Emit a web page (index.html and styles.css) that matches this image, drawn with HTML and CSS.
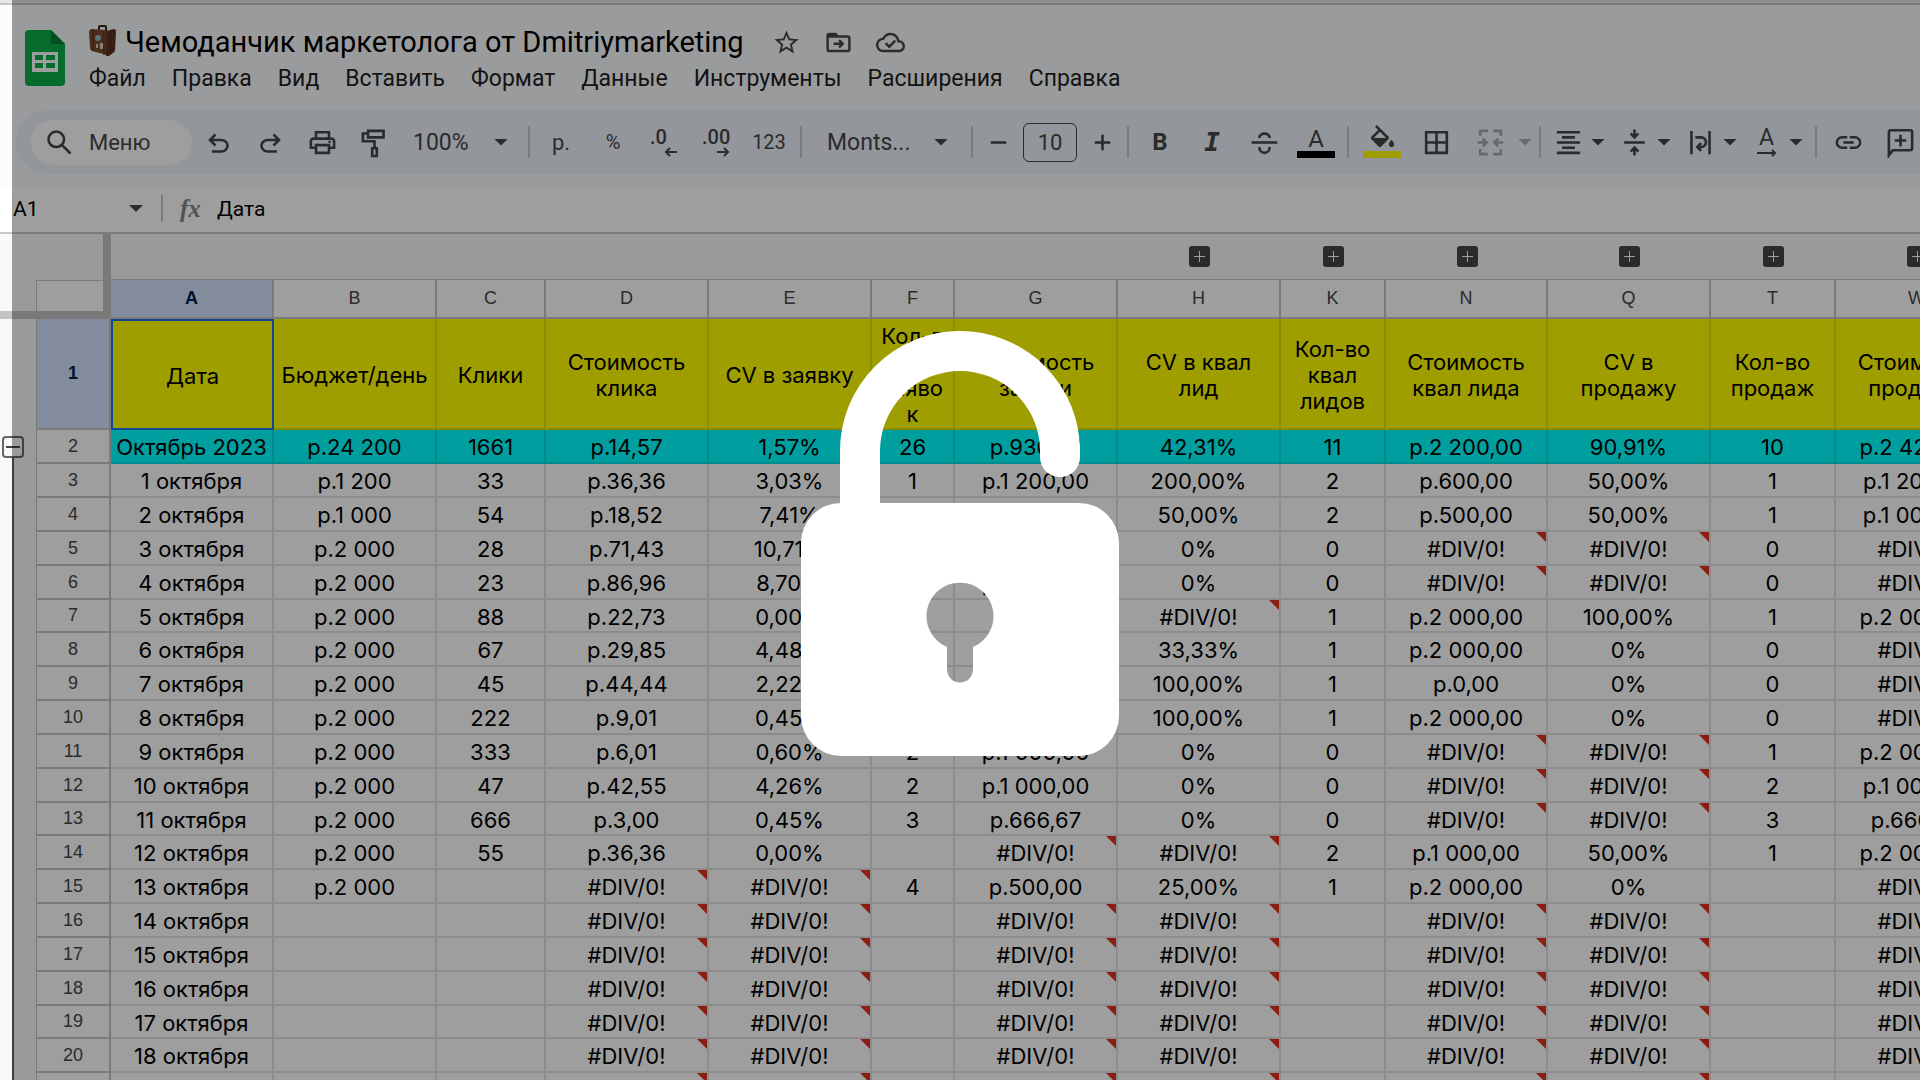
FILE: index.html
```html
<!DOCTYPE html>
<html lang="ru">
<head>
    <meta charset="UTF-8">
    <meta name="viewport" content="width=device-width, initial-scale=1.0">
    <title>Чемоданчик маркетолога от Dmitriymarketing</title>
    <link rel="stylesheet" href="styles.css">
</head>
<body>
    <div class="top-strip"></div>

    <header class="header">
        <svg class="logo" viewBox="0 0 40 56">
            <path fill="#0aaf4b" d="M4 0h22l14 14v38a4 4 0 0 1-4 4H4a4 4 0 0 1-4-4V4a4 4 0 0 1 4-4z"/>
            <path fill="#088038" d="M26 0l14 14H26z"/>
            <path fill="#fff" fill-rule="evenodd" d="M7 22h26v20H7zM10 25v5h8v-5zM21 25v5h9v-5zM10 33v5h8v-5zM21 33v5h9v-5z"/>
        </svg>
        <div class="header-main">
            <div class="title-row">
                <svg class="suitcase" viewBox="0 0 28 31">
                    <path fill="none" stroke="#3a2418" stroke-width="2" d="M10 5V2q0-1 1-1h5q1 0 1 1v4"/>
                    <path fill="#7d4a2c" d="M0 7q0-2 2-3l14 1q2 0 2 2v23L3 26q-2-1-2-3z"/>
                    <path fill="#5c3520" d="M17 6l8-2q2 0 2 3l-1 18q0 2-2 3l-4 3h-3z"/>
                    <path stroke="#4a2c1a" stroke-width="1" d="M4 5v21M15 6v24M22 5v24"/>
                    <circle cx="9" cy="13" r="3" fill="#8fb8c4"/>
                    <path fill="#d8d0c4" d="M7 19h2v4H7zM11 18h3v6h-3z"/>
                </svg>
                <h1>Чемоданчик маркетолога от Dmitriymarketing</h1>
                <button class="title-btn" aria-label="Пометить">
                    <svg class="icon" viewBox="0 0 24 24"><path d="M22 9.24l-7.19-.62L12 2 9.19 8.63 2 9.24l5.46 4.73L5.82 21 12 17.27 18.18 21l-1.63-7.03L22 9.24zM12 15.4l-3.76 2.27 1-4.28-3.32-2.88 4.38-.38L12 6.1l1.71 4.04 4.38.38-3.32 2.88 1 4.28L12 15.4z"/></svg>
                </button>
                <button class="title-btn" aria-label="Переместить">
                    <svg class="icon" viewBox="0 0 24 24"><path d="M20 6h-8l-2-2H4c-1.1 0-2 .9-2 2v12c0 1.1.9 2 2 2h16c1.1 0 2-.9 2-2V8c0-1.1-.9-2-2-2zm0 12H4V8h16v10z"/><path class="line" d="M8 13h7M12.5 10l3 3-3 3"/></svg>
                </button>
                <button class="title-btn" aria-label="Сохранено на Диске">
                    <svg class="icon" viewBox="0 0 24 24"><path d="M19.35 10.04C18.67 6.59 15.64 4 12 4 9.11 4 6.6 5.64 5.35 8.04 2.34 8.36 0 10.91 0 14c0 3.31 2.69 6 6 6h13c2.76 0 5-2.24 5-5 0-2.64-2.05-4.78-4.65-4.96zM19 18H6c-2.21 0-4-1.79-4-4 0-2.05 1.53-3.76 3.56-3.97l1.07-.11.5-.95C8.08 7.14 9.94 6 12 6c2.62 0 4.88 1.86 5.39 4.43l.3 1.5 1.53.11c1.56.1 2.78 1.41 2.78 2.96 0 1.65-1.35 3-3 3z"/><path class="line" d="M8 12.5l3 3 5-5"/></svg>
                </button>
            </div>
            <nav class="menu">
                <a href="#">Файл</a>
                <a href="#">Правка</a>
                <a href="#">Вид</a>
                <a href="#">Вставить</a>
                <a href="#">Формат</a>
                <a href="#">Данные</a>
                <a href="#">Инструменты</a>
                <a href="#">Расширения</a>
                <a href="#">Справка</a>
            </nav>
        </div>
    </header>

    <div class="toolbar">
        <button class="search">
            <svg class="icon" viewBox="0 0 24 24"><circle class="line" cx="9.5" cy="9.5" r="6"/><path class="line" d="M14 14l6.5 6.5"/></svg>
            Меню
        </button>
        <button class="tool" aria-label="Отменить">
            <svg class="icon" viewBox="0 0 24 24"><path d="M7 20v-2h7.1q1.6 0 2.7-1t1.2-2.5-1.2-2.5-2.7-1H7.8l2.6 2.6L9 15l-5-5 5-5 1.4 1.4L7.8 9h6.3q2.4 0 4.2 1.6t1.7 3.9-1.7 3.9-4.2 1.6z"/></svg>
        </button>
        <button class="tool" aria-label="Повторить">
            <svg class="icon" viewBox="0 0 24 24"><path transform="matrix(-1 0 0 1 24 0)" d="M7 20v-2h7.1q1.6 0 2.7-1t1.2-2.5-1.2-2.5-2.7-1H7.8l2.6 2.6L9 15l-5-5 5-5 1.4 1.4L7.8 9h6.3q2.4 0 4.2 1.6t1.7 3.9-1.7 3.9-4.2 1.6z"/></svg>
        </button>
        <button class="tool" aria-label="Печать">
            <svg class="icon" viewBox="0 0 24 24"><path d="M19 8h-1V3H6v5H5c-1.66 0-3 1.34-3 3v6h4v4h12v-4h4v-6c0-1.66-1.34-3-3-3zM8 5h8v3H8V5zm8 14H8v-4h8v4zm2-4v-2H6v2H4v-4c0-.55.45-1 1-1h14c.55 0 1 .45 1 1v4h-2z"/><circle cx="17.5" cy="11.5" r="1"/></svg>
        </button>
        <button class="tool" aria-label="Копировать форматирование">
            <svg class="icon" viewBox="0 0 24 24"><path class="line" d="M7 3h12v5H7zM7 5H3v6h9v5M10.2 16.500h3.600v6h-3.600z"/></svg>
        </button>
        <label class="dropdown zoom">
            <select aria-label="Масштаб"><option>100%</option></select>
            <span class="caret"></span>
        </label>
        <span class="sep"></span>
        <button class="tool">р.</button>
        <button class="tool small">%</button>
        <button class="tool decimals">
            <span>.0</span>
            <svg viewBox="0 0 14 10"><path class="line" d="M13 5H2M6 1L2 5l4 4"/></svg>
        </button>
        <button class="tool decimals">
            <span>.00</span>
            <svg viewBox="0 0 14 10"><path class="line" d="M1 5h11M8 1l4 4-4 4"/></svg>
        </button>
        <button class="tool small">123</button>
        <span class="sep"></span>
        <label class="dropdown font">
            <select aria-label="Шрифт"><option>Monts...</option></select>
            <span class="caret"></span>
        </label>
        <span class="sep"></span>
        <button class="tool step" aria-label="Уменьшить"><svg class="icon" viewBox="0 0 24 24"><path class="line" d="M6 12h12"/></svg></button>
        <input class="size" type="text" value="10" aria-label="Размер шрифта">
        <button class="tool step" aria-label="Увеличить"><svg class="icon" viewBox="0 0 24 24"><path class="line" d="M6 12h12M12 6v12"/></svg></button>
        <span class="sep"></span>
        <button class="tool bold">B</button>
        <button class="tool italic">I</button>
        <button class="tool" aria-label="Зачеркнутый">
            <svg class="icon" viewBox="0 0 24 24"><path class="line" d="M2 12h20M8 8.500c0-4.500 8-4.500 8 0M8 15.500c0 6 8 6 8 0"/></svg>
        </button>
        <button class="tool color">
            <span>A</span>
            <span class="bar"></span>
        </button>
        <span class="sep"></span>
        <div class="cell-tools">
            <button class="tool color fill" aria-label="Цвет заливки">
                <svg class="icon" viewBox="0 0 24 24"><path d="M16.56 8.94L7.62 0 6.21 1.41l2.38 2.38-5.15 5.15c-.59.59-.59 1.54 0 2.12l5.5 5.5c.29.29.68.44 1.06.44s.77-.15 1.06-.44l5.5-5.5c.59-.58.59-1.53 0-2.12zM5.21 10L10 5.21 14.79 10H5.21zM19 11.5s-2 2.17-2 3.5c0 1.1.9 2 2 2s2-.9 2-2c0-1.33-2-3.5-2-3.5z"/></svg>
                <span class="bar"></span>
            </button>
            <button class="tool" aria-label="Границы">
                <svg class="icon" viewBox="0 0 24 24"><path d="M3 3v18h18V3H3zm8 16H5v-6h6v6zm0-8H5V5h6v6zm8 8h-6v-6h6v6zm0-8h-6V5h6v6z"/></svg>
            </button>
            <button class="tool" disabled aria-label="Объединить ячейки">
                <svg class="icon" viewBox="0 0 24 24"><path class="line" d="M10 3H4v4M14 3h6v4M4 17v4h6M20 17v4h-6M2 12h7M6 9l3 3-3 3M22 12h-7M18 9l-3 3 3 3"/></svg>
            </button>
            <span class="caret off"></span>
        </div>
        <span class="sep"></span>
        <button class="tool split" aria-label="Выравнивание">
            <svg class="icon" viewBox="0 0 24 24"><path d="M7 15v2h10v-2H7zm-4 6h18v-2H3v2zm0-8h18v-2H3v2zm4-6v2h10V7H7zM3 3v2h18V3H3z"/></svg>
            <span class="caret"></span>
        </button>
        <button class="tool split" aria-label="Вертикальное выравнивание">
            <svg class="icon" viewBox="0 0 24 24"><path class="line" d="M4 12h16M12 2v5M9 5l3 3 3-3M12 22v-5M9 19l3-3 3 3"/></svg>
            <span class="caret"></span>
        </button>
        <button class="tool split" aria-label="Перенос текста">
            <svg class="icon" viewBox="0 0 24 24"><path class="line" d="M5 3v18M19 3v18M8 8h4.500a3.500 3.500 0 0 1 0 7.500H10M12.500 12.500l-3 3 3 3"/></svg>
            <span class="caret"></span>
        </button>
        <button class="tool split rotate" aria-label="Поворот текста">
            <span class="letter">
                <span>A</span>
                <svg viewBox="0 0 22 8"><path class="line" d="M1 4h18M16 1l3 3-3 3"/></svg>
            </span>
            <span class="caret"></span>
        </button>
        <span class="sep"></span>
        <button class="tool" aria-label="Вставить ссылку">
            <svg class="icon" viewBox="0 0 24 24"><path d="M3.9 12c0-1.71 1.39-3.1 3.1-3.1h4V7H7a5 5 0 0 0 0 10h4v-1.9H7c-1.71 0-3.1-1.39-3.1-3.1zM8 13h8v-2H8v2zm9-6h-4v1.9h4c1.71 0 3.1 1.39 3.1 3.1s-1.39 3.1-3.1 3.1h-4V17h4a5 5 0 0 0 0-10z"/></svg>
        </button>
        <button class="tool" aria-label="Вставить комментарий">
            <svg class="icon" viewBox="0 0 24 24"><path class="line" d="M3 22V4q0-1.500 1.500-1.500h15Q21 2.500 21 4v12.500q0 1.500-1.500 1.500H6zM12 6v9M7.500 10.500h9"/></svg>
        </button>
    </div>

    <div class="formula-bar">
        <input class="name-box" type="text" value="A1" aria-label="Поле имени">
        <span class="caret"></span>
        <span class="formula-sep"></span>
        <label class="fx" for="formula">fx</label>
        <input id="formula" type="text" value="Дата">
    </div>

    <main class="sheet">
        <table>
            <colgroup id="cols"></colgroup>
            <thead id="head"></thead>
            <tbody id="rows"></tbody>
        </table>
    </main>

    <div class="overlay">
        <svg class="lock" viewBox="0 0 320 426">
            <path fill="none" stroke="#fff" stroke-width="40" d="M60 190V121a100 100 0 0 1 200 0"/>
            <path fill="none" stroke="#fff" stroke-width="40" stroke-linecap="round" d="M260 120v7"/>
            <path fill="#fff" fill-rule="evenodd" d="M41 173h238a40 40 0 0 1 40 40v173a40 40 0 0 1-40 40H41a40 40 0 0 1-40-40V213a40 40 0 0 1 40-40zM147 317v22.500a13 13 0 0 0 26 0V317a33.500 33.500 0 1 0-26 0z"/>
        </svg>
    </div>

    <script>
        const ERR = '#DIV/0!';

        const columns = [
            { name: 'A', width: 163, title: 'Дата' },
            { name: 'B', width: 163, title: 'Бюджет/день' },
            { name: 'C', width: 109, title: 'Клики' },
            { name: 'D', width: 163, title: 'Стоимость<br>клика' },
            { name: 'E', width: 163, title: 'CV в заявку' },
            { name: 'F', width: 83, title: 'Кол-в<br>о<br>заяво<br>к' },
            { name: 'G', width: 163, title: 'Стоимость<br>заявки' },
            { name: 'H', width: 163, title: 'CV в квал<br>лид', group: true },
            { name: 'K', width: 105, title: 'Кол-во<br>квал<br>лидов', group: true },
            { name: 'N', width: 162, title: 'Стоимость<br>квал лида', group: true },
            { name: 'Q', width: 163, title: 'CV в<br>продажу', group: true },
            { name: 'T', width: 125, title: 'Кол-во<br>продаж', group: true },
            { name: 'W', width: 163, title: 'Стоимость<br>продажи', group: true }
        ];

        const rows = [
            ['Октябрь 2023', 'р.24 200', '1661', 'р.14,57', '1,57%', '26', 'р.930,77', '42,31%', '11', 'р.2 200,00', '90,91%', '10', 'р.2 420,00'],
            ['1 октября', 'р.1 200', '33', 'р.36,36', '3,03%', '1', 'р.1 200,00', '200,00%', '2', 'р.600,00', '50,00%', '1', 'р.1 200,00'],
            ['2 октября', 'р.1 000', '54', 'р.18,52', '7,41%', '4', 'р.250,00', '50,00%', '2', 'р.500,00', '50,00%', '1', 'р.1 000,00'],
            ['3 октября', 'р.2 000', '28', 'р.71,43', '10,71%', '3', 'р.666,67', '0%', '0', ERR, ERR, '0', ERR],
            ['4 октября', 'р.2 000', '23', 'р.86,96', '8,70%', '2', 'р.1 000,00', '0%', '0', ERR, ERR, '0', ERR],
            ['5 октября', 'р.2 000', '88', 'р.22,73', '0,00%', '', ERR, ERR, '1', 'р.2 000,00', '100,00%', '1', 'р.2 000,00'],
            ['6 октября', 'р.2 000', '67', 'р.29,85', '4,48%', '3', 'р.666,67', '33,33%', '1', 'р.2 000,00', '0%', '0', ERR],
            ['7 октября', 'р.2 000', '45', 'р.44,44', '2,22%', '1', 'р.2 000,00', '100,00%', '1', 'р.0,00', '0%', '0', ERR],
            ['8 октября', 'р.2 000', '222', 'р.9,01', '0,45%', '1', 'р.2 000,00', '100,00%', '1', 'р.2 000,00', '0%', '0', ERR],
            ['9 октября', 'р.2 000', '333', 'р.6,01', '0,60%', '2', 'р.1 000,00', '0%', '0', ERR, ERR, '1', 'р.2 000,00'],
            ['10 октября', 'р.2 000', '47', 'р.42,55', '4,26%', '2', 'р.1 000,00', '0%', '0', ERR, ERR, '2', 'р.1 000,00'],
            ['11 октября', 'р.2 000', '666', 'р.3,00', '0,45%', '3', 'р.666,67', '0%', '0', ERR, ERR, '3', 'р.666,67'],
            ['12 октября', 'р.2 000', '55', 'р.36,36', '0,00%', '', ERR, ERR, '2', 'р.1 000,00', '50,00%', '1', 'р.2 000,00'],
            ['13 октября', 'р.2 000', '', ERR, ERR, '4', 'р.500,00', '25,00%', '1', 'р.2 000,00', '0%', '', ERR]
        ];

        // the rest of the month has no data yet
        for (let day = 14; day <= 19; day++) {
            rows.push([day + ' октября', '', '', ERR, ERR, '', ERR, ERR, '', ERR, ERR, '', ERR]);
        }

        document.getElementById('cols').innerHTML =
            '<col class="col-gutter"><col class="col-number">' +
            columns.map(c => `<col style="width: ${c.width}px">`).join('');

        document.getElementById('head').innerHTML = `
            <tr class="groups">
                <td class="corner" colspan="2"></td>
                ${columns.map(c => `<td>${c.group ? '<button class="expand" aria-label="Развернуть"></button>' : ''}</td>`).join('')}
            </tr>
            <tr class="letters">
                <td class="corner-left"></td>
                <td class="corner-cell"></td>
                ${columns.map(c => `<th scope="col"${c.name === 'A' ? ' class="selected"' : ''}>${c.name}</th>`).join('')}
            </tr>
            <tr class="titles">
                <td class="gutter"></td>
                <th scope="row" class="number selected">1</th>
                ${columns.map(c => `<td${c.name === 'A' ? ' class="active"' : ''}>${c.title}</td>`).join('')}
            </tr>`;

        document.getElementById('rows').innerHTML = rows.map((row, i) => `
            <tr${i === 0 ? ' class="month"' : ''}>
                <td class="gutter">${i === 0 ? '<button class="collapse" aria-label="Свернуть"></button>' : ''}</td>
                <th scope="row" class="number">${i + 2}</th>
                ${row.map(v => `<td${v === ERR ? ' class="error"' : ''}>${v}</td>`).join('')}
            </tr>`).join('');
    </script>
</body>
</html>
```

FILE: styles.css
```css
* {
    box-sizing: border-box;
}
body {
    margin: 0;
    height: 100vh;
    overflow: hidden;
    background: #fff;
    color: #000;
    font-family: Roboto, "Liberation Sans", sans-serif;
}
button, input, select {
    font-family: inherit;
    color: inherit;
    border: none;
    background: none;
    padding: 0;
}
.icon {
    display: block;
    flex: none;
    width: 31px;
    height: 31px;
    fill: #444746;
}
.line {
    fill: none;
    stroke: #444746;
    stroke-width: 2;
}
.caret {
    flex: none;
    width: 14px;
    height: 7px;
    background: #444746;
    clip-path: polygon(0 0, 100% 0, 50% 100%);
}
.caret.off {
    background: #aaa;
}

/* header */
.top-strip {
    height: 5px;
    background: #e8e8e8;
    border-bottom: 2px solid #c6c6c6;
}
.header {
    display: flex;
    height: 105px;
    padding-left: 25px;
    background: #f9fbfd;
}
.logo {
    flex: none;
    width: 40px;
    height: 56px;
    margin-top: 25px;
}
.header-main {
    margin-left: 24px;
    padding-top: 17px;
}
.title-row {
    display: flex;
    align-items: center;
    height: 40px;
}
.suitcase {
    width: 28px;
    height: 31px;
    margin-right: 8px;
    margin-bottom: 4px;
}
h1 {
    margin: 0 17px 0 0;
    font-size: 29px;
    font-weight: 400;
    line-height: 40px;
    white-space: nowrap;
}
.title-btn {
    display: flex;
    justify-content: center;
    width: 52px;
}
.title-btn .icon {
    width: 29px;
    height: 29px;
}
.menu {
    display: flex;
    gap: 26px;
    height: 32px;
    align-items: center;
}
.menu a {
    color: #1f1f1f;
    font-size: 23px;
    text-decoration: none;
}

/* toolbar */
.toolbar {
    display: flex;
    align-items: center;
    height: 77px;
    padding: 0 0 13px 31px;
    overflow: hidden;
    color: #444746;
    background: #f9fbfd;
    position: relative;
    z-index: 0;
}
.toolbar::before {
    content: "";
    position: absolute;
    z-index: -1;
    top: 0;
    right: 0;
    bottom: 13px;
    left: 16px;
    border-radius: 32px 0 0 32px;
    background: #eef2fa;
}
.toolbar > * {
    flex: none;
}
.search {
    display: flex;
    align-items: center;
    gap: 14px;
    width: 161px;
    height: 45px;
    padding-left: 13px;
    border-radius: 23px;
    background: #fff;
    font-size: 22px;
}
.tool {
    display: flex;
    align-items: center;
    justify-content: center;
    width: 52px;
    height: 45px;
    font-size: 22px;
}
.tool.small {
    font-size: 20px;
}
.tool:disabled .line {
    stroke: #aaa;
}
.tool.step {
    width: 40px;
}
.sep {
    width: 2px;
    height: 32px;
    margin: 0 5px;
    background: #c7c7c7;
}
.dropdown {
    display: flex;
    align-items: center;
    justify-content: space-between;
}
.dropdown select {
    appearance: none;
    font-size: 23px;
}
.zoom {
    width: 123px;
    padding: 0 15px 0 13px;
}
.font {
    width: 159px;
    padding: 0 18px 0 20px;
}
.decimals {
    flex-direction: column;
    align-items: flex-start;
    padding-left: 11px;
    line-height: 20px;
    font-size: 20px;
    font-weight: 500;
}
.decimals svg {
    width: 14px;
    height: 10px;
    margin-left: 14px;
}
.size {
    width: 54px;
    height: 39px;
    margin: 0 5px;
    border: 1px solid #444746;
    border-radius: 6px;
    font-size: 22px;
    text-align: center;
}
.bold {
    font-size: 24px;
    font-weight: 700;
}
.italic {
    font-family: "DejaVu Sans Mono", monospace;
    font-size: 26px;
    font-weight: 700;
    font-style: italic;
}
.color {
    flex-direction: column;
    justify-content: flex-end;
    height: 32px;
    line-height: 24px;
    font-size: 24px;
}
.color .icon {
    margin-bottom: -5px;
}
.bar {
    width: 38px;
    height: 7px;
    flex: none;
    background: #000;
}
.fill .bar {
    background: #ff0;
}
.cell-tools {
    display: flex;
    align-items: center;
    gap: 2px;
    padding: 0 2px;
}
.tool.split {
    width: 66px;
    justify-content: space-between;
    padding: 0 7px;
}
.letter {
    width: 31px;
    display: flex;
    flex-direction: column;
    align-items: center;
    font-size: 23px;
    line-height: 22px;
}
.letter svg {
    width: 22px;
    height: 8px;
}

/* formula bar */
.formula-bar {
    display: flex;
    align-items: center;
    height: 47px;
    padding-bottom: 2px;
    border-bottom: 2px solid #c7c7c7;
    font-size: 21px;
}
.formula-bar input {
    height: 40px;
    font-size: 21px;
}
.name-box {
    width: 129px;
    padding-left: 13px;
}
.formula-sep {
    width: 2px;
    height: 27px;
    margin: 0 17px 0 18px;
    background: #c7c7c7;
}
.fx {
    width: 37px;
    color: #80868b;
    font: italic 700 25px "Liberation Serif", serif;
}
#formula {
    flex: 1;
}

/* sheet */
table {
    width: 1997px;
    table-layout: fixed;
    border-collapse: separate;
    border-spacing: 0;
    text-align: center;
}
.col-gutter {
    width: 36px;
}
.col-number {
    width: 75px;
}
th, td {
    position: relative;
    height: 34px;
    padding: 0;
    border: 0 solid #e2e2e2;
    border-width: 0 2px 2px 0;
    white-space: nowrap;
}
td {
    padding-top: 2px;
    font-family: Inter, "Open Sans", sans-serif;
    font-size: 22px;
    line-height: 26px;
}
tbody tr:nth-child(6n) > * {
    height: 33px;
}
.groups td {
    height: 46px;
    padding: 0;
    border-width: 0 0 1px;
    border-color: #c4c7c5;
    background: #f8f9fa;
}
.groups .corner {
    border-right: 8px solid #c4c4c4;
    border-bottom: none;
}
.expand {
    display: block;
    width: 21px;
    height: 21px;
    margin: 0 auto;
    border-radius: 3px;
    background:
        linear-gradient(#fff, #fff) center / 11px 1px no-repeat,
        linear-gradient(#fff, #fff) center / 1px 11px no-repeat,
        #444746;
}
.letters > * {
    height: 39px;
    border-color: #c4c7c5;
    color: #444746;
    font: 18px "Liberation Sans", sans-serif;
}
.letters .corner-left {
    border-width: 0 0 8px;
    border-color: #c4c4c4;
    background: #f8f9fa;
}
.letters .corner-cell {
    border-width: 1px 8px 8px 1px;
    border-style: solid;
    border-color: #c4c7c5 #c4c4c4 #c4c4c4 #c4c7c5;
}
.number {
    border-color: #c4c7c5;
    border-left-width: 1px;
    color: #444746;
    font: 18px "Liberation Sans", sans-serif;
}
.letters .selected, .titles .selected {
    background: #d3e3fd;
    color: #041e49;
    font-weight: 700;
}
.titles > * {
    height: 111px;
}
.titles td {
    background: #ff0;
    border-color: #e2e200;
}
.titles .active {
    border: 2px solid #1a73e8;
}
.month td {
    background: #0ff;
    border-color: #00e2e2;
}
td.gutter {
    padding: 0;
    border: none;
    background: linear-gradient(#666, #666) 12px 0 / 2px 100% no-repeat #f8f9fa;
}
.titles .gutter {
    background: #f8f9fa;
}
.month .gutter {
    background: linear-gradient(#666, #666) 12px 100% / 2px 50% no-repeat #f8f9fa;
}
.collapse {
    display: block;
    width: 22px;
    height: 22px;
    margin-left: 2px;
    border: 2px solid #666;
    border-radius: 4px;
    background: linear-gradient(#444746, #444746) center / 14px 2px no-repeat #f8f9fa;
}
.error::after {
    content: "";
    position: absolute;
    top: 0;
    right: 0;
    width: 10px;
    height: 10px;
    background: #e0301e;
    clip-path: polygon(0 0, 100% 0, 100% 100%);
}

/* locked state */
.overlay {
    position: fixed;
    top: 0;
    right: 0;
    bottom: 0;
    left: 12px;
    display: flex;
    align-items: center;
    justify-content: center;
    padding: 6px 12px 0 0;
    background: rgba(0, 0, 0, 0.38);
}
.lock {
    width: 320px;
    height: 426px;
}
```
